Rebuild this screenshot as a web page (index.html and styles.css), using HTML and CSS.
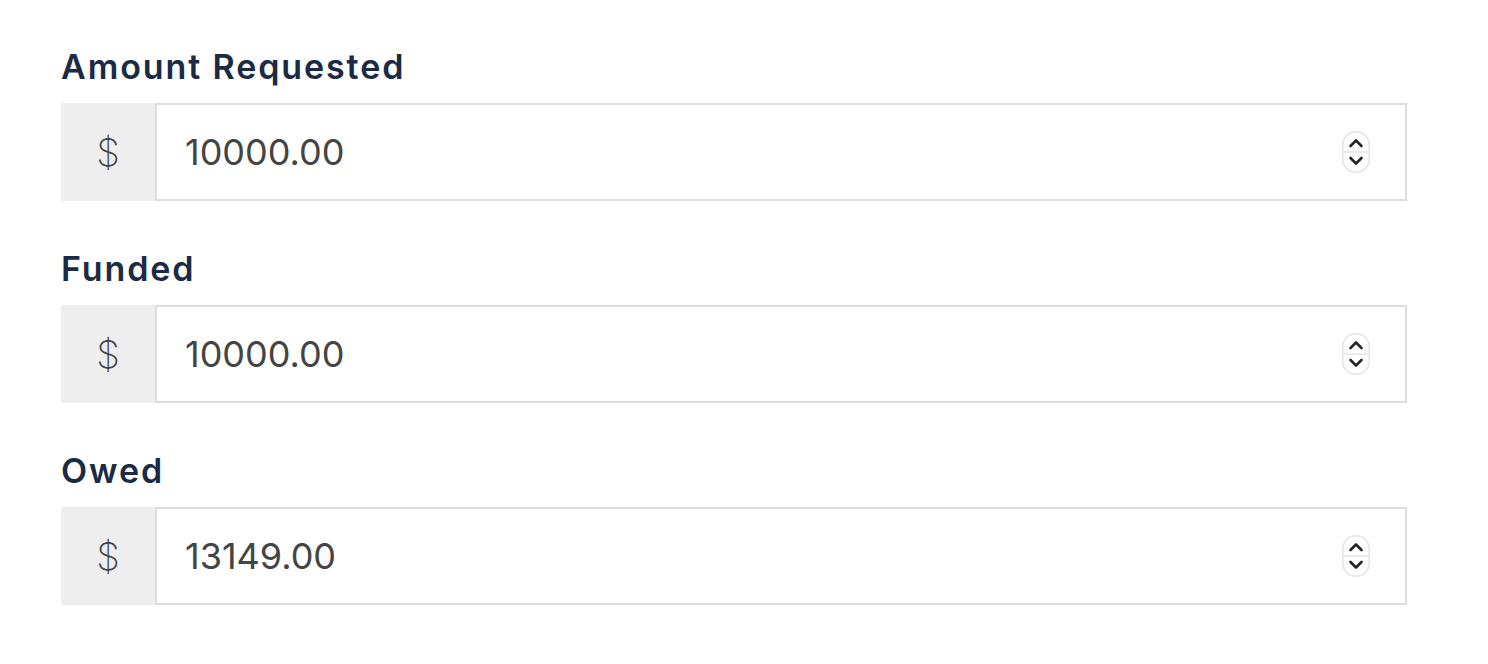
FILE: index.html
```html
<!DOCTYPE html>
<html lang="en">
<head>
  <meta charset="UTF-8">
  <title>Loan Amounts</title>
  <link rel="stylesheet" href="styles.css">
</head>
<body>
  <form class="amounts">
    <div class="field">
      <label class="field-label" for="requested">Amount Requested</label>
      <div class="money-input">
        <span class="prefix">$</span>
        <div class="box">
          <input id="requested" type="text" value="10000.00">
          <span class="spinner">
            <svg width="28" height="42" viewBox="0 0 28 42">
              <rect x="0.75" y="0.75" width="26.5" height="40.5" rx="13" fill="#fff" stroke="#e3e3e3" stroke-width="1.5"/>
              <line x1="1" y1="21" x2="27" y2="21" stroke="#e3e3e3" stroke-width="1.5"/>
              <path d="M8.5 15 L14 9.5 L19.5 15" fill="none" stroke="#262626" stroke-width="2.6" stroke-linecap="round" stroke-linejoin="round"/>
              <path d="M8.5 27 L14 32.5 L19.5 27" fill="none" stroke="#262626" stroke-width="2.6" stroke-linecap="round" stroke-linejoin="round"/>
            </svg>
          </span>
        </div>
      </div>
    </div>
    <div class="field">
      <label class="field-label" for="funded">Funded</label>
      <div class="money-input">
        <span class="prefix">$</span>
        <div class="box">
          <input id="funded" type="text" value="10000.00">
          <span class="spinner">
            <svg width="28" height="42" viewBox="0 0 28 42">
              <rect x="0.75" y="0.75" width="26.5" height="40.5" rx="13" fill="#fff" stroke="#e3e3e3" stroke-width="1.5"/>
              <line x1="1" y1="21" x2="27" y2="21" stroke="#e3e3e3" stroke-width="1.5"/>
              <path d="M8.5 15 L14 9.5 L19.5 15" fill="none" stroke="#262626" stroke-width="2.6" stroke-linecap="round" stroke-linejoin="round"/>
              <path d="M8.5 27 L14 32.5 L19.5 27" fill="none" stroke="#262626" stroke-width="2.6" stroke-linecap="round" stroke-linejoin="round"/>
            </svg>
          </span>
        </div>
      </div>
    </div>
    <div class="field">
      <label class="field-label" for="owed">Owed</label>
      <div class="money-input">
        <span class="prefix">$</span>
        <div class="box">
          <input id="owed" type="text" value="13149.00">
          <span class="spinner">
            <svg width="28" height="42" viewBox="0 0 28 42">
              <rect x="0.75" y="0.75" width="26.5" height="40.5" rx="13" fill="#fff" stroke="#e3e3e3" stroke-width="1.5"/>
              <line x1="1" y1="21" x2="27" y2="21" stroke="#e3e3e3" stroke-width="1.5"/>
              <path d="M8.5 15 L14 9.5 L19.5 15" fill="none" stroke="#262626" stroke-width="2.6" stroke-linecap="round" stroke-linejoin="round"/>
              <path d="M8.5 27 L14 32.5 L19.5 27" fill="none" stroke="#262626" stroke-width="2.6" stroke-linecap="round" stroke-linejoin="round"/>
            </svg>
          </span>
        </div>
      </div>
    </div>
  </form>
</body>
</html>
```

FILE: styles.css
```css
body {
  margin: 0;
  font-family: Inter, "Noto Sans", sans-serif;
  background-color: #fff;
}

.amounts {
  width: 1346px;
  padding: 47px 0 0 61px;
  display: flex;
  flex-direction: column;
  gap: 48px;
}

.field-label {
  display: block;
  margin-bottom: 16px;
  font-size: 34px;
  line-height: 40px;
  font-weight: 600;
  letter-spacing: 1.9px;
  color: #1b2a45;
}

.money-input {
  display: flex;
  height: 98px;
}

.prefix {
  width: 94px;
  display: flex;
  justify-content: center;
  align-items: center;
  background-color: #eeeeee;
  font-size: 38px;
  font-weight: 200;
  color: #444;
}

.box {
  flex: 1;
  display: flex;
  align-items: center;
  border: 2px solid #dddddd;
  padding: 0 35px 0 28px;
}

.box input {
  flex: 1;
  border: none;
  outline: none;
  padding: 0;
  font-family: inherit;
  font-size: 36px;
  color: #444;
  background: transparent;
}

.spinner {
  display: flex;
}
```
